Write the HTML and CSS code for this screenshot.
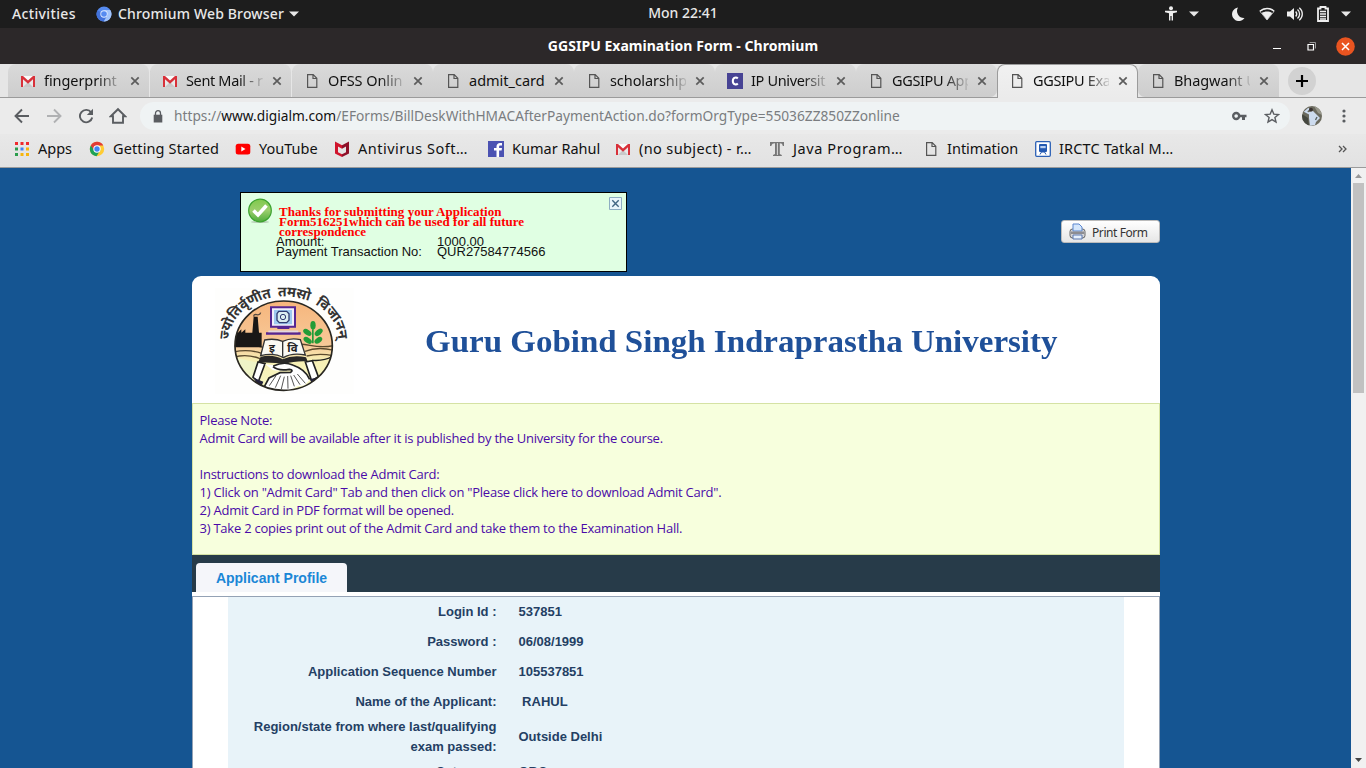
FILE: index.html
```html
<!DOCTYPE html>
<html lang="en">
<head>
<meta charset="utf-8">
<title>GGSIPU Examination Form - Chromium</title>
<link rel="stylesheet" href="styles.css">
</head>
<body>
<svg class="defs" width="0" height="0" aria-hidden="true">
  <symbol id="gmail" viewBox="0 0 16 16"><path fill="#e9e9e9" d="M1 3h14v11H1z"/><path fill="#c9c9c9" d="M3 14l5-5 5 5z"/><path fill="#fafafa" d="M2 3h12L8 8z"/><path fill="#d8313a" d="M1 14V3h2l5 4.400L13 3h2v11h-2V6.200l-5 4.500-5-4.500V14z"/></symbol>
  <symbol id="file" viewBox="0 0 16 16"><path d="M3.600 1.700h5.600l3.600 3.600v9H3.600zM9 1.700v3.800h3.800" fill="none" stroke="#555" stroke-width="1.200"/></symbol>
  <symbol id="close" viewBox="0 0 10 10"><path d="M1.300 1.300l7.400 7.400M8.700 1.300L1.300 8.700" stroke="#5c5c5c" stroke-width="1.700"/></symbol>
  <symbol id="caret" viewBox="0 0 10 6"><path d="M0 .5h10L5 5.500z" fill="#e8e8e8"/></symbol>
</svg>

<header class="topbar">
  <span class="activities">Activities</span>
  <svg class="app-icon" viewBox="0 0 16 16"><circle cx="8" cy="8" r="7.500" fill="#568bf0"/><path d="M8 8L1.500 4.200A7.500 7.500 0 0 0 7.500 15.500l3.700-6z" fill="#4272da"/><path d="M8 4h6.300a7.500 7.500 0 0 1-6.500 11.500L11.600 9z" fill="#a2c4fa"/><circle cx="8" cy="8" r="3.700" fill="#dce9ff"/><circle cx="8" cy="8" r="2.800" fill="#568bf0"/></svg>
  <span class="app-name">Chromium Web Browser</span>
  <svg class="caret"><use href="#caret"/></svg>
  <span class="clock">Mon 22:41</span>
  <div class="tray">
    <svg width="12" height="15" viewBox="0 0 12 15" fill="#eee"><circle cx="6" cy="2.200" r="2"/><path d="M0 4.800h12v1.500L8 7.200v7.300H6.600V10H5.400v4.500H4V7.200L0 6.300z"/></svg>
    <svg class="caret"><use href="#caret"/></svg>
    <svg class="moon" width="13" height="14" viewBox="0 0 13 14"><path d="M6 .5A6.800 6.800 0 1 0 12.500 11 7 7 0 0 1 6 .5z" fill="#eee"/></svg>
    <svg class="wifi" width="16" height="14" viewBox="0 0 16 14"><path d="M1 4.500C5 .5 11 .5 15 4.500L8 13z" fill="none" stroke="#aaa" stroke-width="1"/><path d="M.8 4.200C5 .5 11 .5 15.200 4.200" fill="none" stroke="#eee" stroke-width="1.500"/><path d="M2.700 6c3-2 7.600-2 10.600 0L8 13z" fill="#eee"/></svg>
    <svg class="sound" width="16" height="14" viewBox="0 0 16 14"><path d="M0 4.500h3L7 1v12L3 9.500H0z" fill="#eee"/><path d="M8.700 4.500c1.300 1.500 1.300 3.500 0 5M10.500 2.500c2.800 2.500 2.800 6.500 0 9M12.300.8c4 3.500 4 9 0 12.400" fill="none" stroke="#eee" stroke-width="1.300"/></svg>
    <svg class="battery" width="12" height="16" viewBox="0 0 12 16"><path d="M1 2.500h2.500V1h5v1.500H11V15H1z" fill="none" stroke="#eee" stroke-width="1.800"/><path d="M3 5.500h6M3 8h6M3 10.500h6M3 13h6" stroke="#eee" stroke-width="1.300"/></svg>
    <svg class="caret"><use href="#caret"/></svg>
  </div>
</header>

<div class="titlebar">
  <h1>GGSIPU Examination Form - Chromium</h1>
  <div class="window-buttons">
    <svg width="8" height="8"><path d="M0 6.500h8" stroke="#fff"/></svg>
    <svg class="restore" width="9" height="9"><path d="M1 2.500h5.500v5.500H1z" fill="none" stroke="#fff" stroke-width="1.200"/><path d="M2.500.5h6v6" fill="none" stroke="#999"/></svg>
    <svg width="19" height="19"><circle cx="9.500" cy="9.500" r="9.300" fill="#e95420"/><path d="M6 6l7 7M13 6l-7 7" stroke="#fff" stroke-width="1.500"/></svg>
  </div>
</div>

<nav class="tabs">
  <div class="tab"><svg><use href="#gmail"/></svg><span>fingerprint</span><svg class="x"><use href="#close"/></svg></div>
  <div class="tab tight"><svg><use href="#gmail"/></svg><span>Sent Mail - r</span><svg class="x"><use href="#close"/></svg></div>
  <div class="tab"><svg><use href="#file"/></svg><span>OFSS Onlin</span><svg class="x"><use href="#close"/></svg></div>
  <div class="tab full"><svg><use href="#file"/></svg><span>admit_card</span><svg class="x"><use href="#close"/></svg></div>
  <div class="tab"><svg><use href="#file"/></svg><span>scholarship</span><svg class="x"><use href="#close"/></svg></div>
  <div class="tab tight"><svg viewBox="0 0 16 16"><path fill="#474394" d="M0 0h16v16H0z"/><path d="M10.800 5.500C9.500 4 5.800 4 5.800 8s3.700 4 5 2.500" fill="none" stroke="#fff" stroke-width="2"/></svg><span>IP Universit</span><svg class="x"><use href="#close"/></svg></div>
  <div class="tab tight"><svg><use href="#file"/></svg><span>GGSIPU App</span><svg class="x"><use href="#close"/></svg></div>
  <div class="tab tight active"><svg><use href="#file"/></svg><span>GGSIPU Exa</span><svg class="x"><use href="#close"/></svg></div>
  <div class="tab"><svg><use href="#file"/></svg><span>Bhagwant U</span><svg class="x"><use href="#close"/></svg></div>
  <svg class="new-tab" viewBox="0 0 28 28"><circle cx="14" cy="14" r="14" fill="#d2d2d2"/><path d="M14 8v12M8 14h12" stroke="#000" stroke-width="2.200"/></svg>
</nav>

<div class="toolbar">
  <svg width="16" height="16" viewBox="0 0 16 16"><path d="M15 8H2M8 1.500L1.500 8 8 14.500" fill="none" stroke="#5a5d61" stroke-width="1.900"/></svg>
  <svg width="16" height="16" viewBox="0 0 16 16"><path d="M1 8h13M8 1.500L14.500 8 8 14.500" fill="none" stroke="#b0b1b3" stroke-width="1.900"/></svg>
  <svg width="16" height="16" viewBox="0 0 16 16"><path d="M13.200 4.500A6.200 6.200 0 1 0 14.200 9.500" fill="none" stroke="#5a5d61" stroke-width="1.900"/><path d="M15 .8v6.200H8.800z" fill="#5a5d61"/></svg>
  <svg width="18" height="18" viewBox="0 0 18 18"><path d="M1.800 9.300L9 2.200l7.200 7.100H14v6.500H4V9.300z" fill="none" stroke="#5a5d61" stroke-width="1.900"/></svg>
  <div class="omnibox">
    <svg width="10" height="13" viewBox="0 0 10 13"><path d="M.7 4.700h8.600v7.800H.7z" fill="#5a5d61"/><path d="M2.500 5V3.200a2.500 2.500 0 0 1 5 0V5" fill="none" stroke="#5a5d61" stroke-width="1.300"/></svg>
    <span class="url">https://<b>www.digialm.com</b>/EForms/BillDeskWithHMACAfterPaymentAction.do?formOrgType=55036ZZ850ZZonline</span>
    <svg class="key" width="15" height="10" viewBox="0 0 15 10"><circle cx="4.200" cy="5" r="3" fill="none" stroke="#5a5d61" stroke-width="2.400"/><path d="M7 3.700h7.500v2.600H13V9h-3V6.300H7z" fill="#5a5d61"/></svg>
    <svg class="star" width="16" height="16" viewBox="0 0 16 16"><path d="M8 1.800l1.800 4.300 4.700.4-3.600 3 1.100 4.600L8 11.600l-4 2.500 1.100-4.600-3.600-3 4.700-.4z" fill="none" stroke="#5a5d61" stroke-width="1.400"/></svg>
  </div>
  <svg class="avatar" width="20" height="20" viewBox="0 0 20 20"><clipPath id="av"><circle cx="10" cy="10" r="10"/></clipPath><g clip-path="url(#av)"><path fill="#6b6a5e" d="M0 0h20v20H0z"/><path fill="#98988c" d="M12 0h8v9l-4-2z"/><path fill="#45473f" d="M0 8l6 4 1 8H0z"/><path fill="#cddbee" d="M7 6l4-1 3 3 4 4-4 4-1 3-5 1-1-8z"/><path d="M15 11l-1.500 3" stroke="#59625f" stroke-width="1.400"/><path d="M8 8L3.500 5.500 7 2.500" fill="none" stroke="#cddbee" stroke-width="2"/><circle cx="9" cy="3.600" r="1.900" fill="#3a3330"/></g></svg>
  <svg class="dots" width="4" height="14" viewBox="0 0 4 14" fill="#5a5d61"><circle cx="2" cy="2" r="1.600"/><circle cx="2" cy="7" r="1.600"/><circle cx="2" cy="12" r="1.600"/></svg>
</div>

<nav class="bookmarks">
  <div><svg viewBox="0 0 16 16"><path fill="#f02a2d" d="M1 1h3v3H1zM6.500 1h3v3h-3zM12 1h3v3h-3z"/><path fill="#2a9d4c" d="M1 6.500h3v3H1zM1 12h3v3H1z"/><path fill="#4285f4" d="M6.500 6.500h3v3h-3z"/><path fill="#f7b50b" d="M12 6.500h3v3h-3zM6.500 12h3v3h-3zM12 12h3v3h-3z"/></svg><span>Apps</span></div>
  <div><svg viewBox="0 0 16 16"><circle cx="8" cy="8" r="7.200" fill="#fc3"/><path d="M8 8L1.800 4.400A7.200 7.200 0 0 0 7.500 15.200l4-6.200z" fill="#1da258"/><path d="M1.800 4.400A7.200 7.200 0 0 1 14.300 4.500H8L4.800 9z" fill="#e23b36"/><circle cx="8" cy="8" r="3.700" fill="#fff"/><circle cx="8" cy="8" r="2.700" fill="#4285f4"/></svg><span class="started">Getting Started</span></div>
  <div><svg viewBox="0 0 16 16"><rect x=".7" y="2.700" width="14.600" height="10.800" rx="2.500" fill="#f00"/><path d="M6.300 5.500v5L10.500 8z" fill="#fff"/></svg><span>YouTube</span></div>
  <div><svg viewBox="0 0 16 16"><path d="M1 .5l7 3.800v3.500L4 5.600v5.600l4 2V16l-7-3.500z" fill="#d0142c"/><path d="M15 .5L8 4.300v3.500l4-2.200v5.600l-4 2V16l7-3.500z" fill="#8f1028"/></svg><span class="antivirus">Antivirus Soft…</span></div>
  <div><svg viewBox="0 0 16 16"><path fill="#4b52b2" d="M0 0h16v16H0z"/><path fill="#fff" d="M8.500 16V9.500H6V7h2.500V5.500C8.500 3.200 10 2 12 2h2v2.500h-1.500c-1 0-1.400.5-1.400 1.300V7H14l-.4 2.500h-2.500V16z"/></svg><span>Kumar Rahul</span></div>
  <div><svg><use href="#gmail"/></svg><span class="subject">(no subject) - r…</span></div>
  <div><svg viewBox="0 0 16 16"><path d="M1 1h14v4h-1.200C13.500 3 12.500 2.300 10.800 2.300V13l2 1v1H4v-1l2-1V2.300C4 2.300 2.800 3 2.300 5H1z" fill="#777"/><path d="M8.400 2v12" stroke="#ddd"/></svg><span class="java">Java Program…</span></div>
  <div><svg><use href="#file"/></svg><span>Intimation</span></div>
  <div><svg viewBox="0 0 16 16"><rect x=".7" y=".7" width="14.600" height="14.600" rx="1" fill="#fff" stroke="#2b60b5" stroke-width="1.300"/><rect x="4" y="3" width="8" height="8" rx="1" fill="#2359b1"/><path d="M5.300 5h5.400v2.200H5.300z" fill="#b9d0f1"/><path d="M5 13.500l1.500-2.500h3l1.500 2.500" stroke="#2359b1" fill="none"/></svg><span class="irctc">IRCTC Tatkal M…</span></div>
  <svg class="more" viewBox="0 0 9 8"><path d="M1 1l3 3-3 3M5 1l3 3-3 3" fill="none" stroke="#555" stroke-width="1.300"/></svg>
</nav>

<div class="viewport">
  <main class="page">
    <section class="top-row">
      <div class="notice">
        <svg class="ok" width="26" height="26" viewBox="0 0 26 26"><defs><linearGradient id="g" x2="0" y2="1"><stop stop-color="#7fc94c"/><stop offset=".5" stop-color="#9bce6d"/><stop offset="1" stop-color="#4fac3c"/></linearGradient></defs><ellipse cx="13" cy="25" rx="9" ry="1" fill="#b5cdb5"/><circle cx="13" cy="13.500" r="11.300" fill="url(#g)" stroke="#3ba22e" stroke-width="1.200"/><path d="M6.500 13.500l4.500 4.500L19.500 8.500" fill="none" stroke="#fff" stroke-width="3.600"/></svg>
        <div class="notice-text">
          <p class="thanks">Thanks for submitting your Application<br>Form516251which can be used for all future<br>correspondence</p>
          <dl><dt>Amount:</dt><dd>1000.00</dd><dt>Payment Transaction No:</dt><dd>QUR27584774566</dd></dl>
        </div>
        <svg class="dismiss" width="13" height="13" viewBox="0 0 13 13"><path d="M.5.5h12v12H.5z" fill="#eaf6fb" stroke="#8eaec2"/><path d="M3.300 3.300l6.400 6.400M9.700 3.300L3.300 9.700" stroke="#426783" stroke-width="1.400"/></svg>
      </div>
      <button class="print" type="button">
        <svg width="17" height="17" viewBox="0 0 17 17"><rect x="1" y="6" width="15" height="9" rx="2.500" fill="#d5d5d8" stroke="#666"/><path d="M4 8V1h6l3 3v4z" fill="#d4e6fb" stroke="#5a86cf"/><path d="M2 8.500h13v2.500H2z" fill="#8d8d92"/><path d="M4 12h9v4H4z" fill="#e6f0fc" stroke="#5a76af"/></svg>
        <span>Print Form</span>
      </button>
    </section>

    <section class="banner">
      <svg class="crest" width="200" height="127" viewBox="6 18 600 381">
        <defs><clipPath id="disc"><ellipse cx="281" cy="227" rx="147" ry="134"/></clipPath>
        <linearGradient id="sky" x2="0" y2="1"><stop stop-color="#f6b57c"/><stop offset=".5" stop-color="#f7c998"/><stop offset=".65" stop-color="#f7efb4"/><stop offset="1" stop-color="#f6f7c4"/></linearGradient>
        <path id="arc" d="M118 209A163 130 0 0 1 444 209"/></defs>
        <path d="M75 53h416v320H75z" fill="#fefefd"/>
        <g clip-path="url(#disc)">
          <path d="M130 90h300v275H130z" fill="url(#sky)"/>
          <path d="M130 230q40-12 80 0t75 0 75-4 75 0M130 246q45-10 85 4M345 244q40-16 90-2M130 262q40-12 80 4M350 258q40-10 85 0" fill="none" stroke="#5b4a2e" stroke-width="4"/>
          <path d="M134 232v-44h10l10-10v10l12-10v10h21l4-48h12l4 48h8v44z" fill="#191716"/>
          <path d="M192 140q-2-8 8-6t12-6" fill="none" stroke="#55483f" stroke-width="4"/>
          <path d="M243 112h72v58h-72z" fill="#f1f1fb" stroke="#562693" stroke-width="6"/><path d="M252 120h54v43h-54z" fill="#9ecaf0"/><path d="M266 124h24l7 7v20l-7 7h-22l-7-7v-20z" fill="#d9edf0" stroke="#303d72" stroke-width="4"/><circle cx="279" cy="141" r="8" fill="none" stroke="#303d72" stroke-width="3"/>
          <path d="M262 170h36v7h-36zM228 187h104v7H228z" fill="#562693"/><path d="M235 184h90" stroke="#e1d7e1" stroke-width="5"/>
          <g fill="#239c37"><path d="M366 220v-42h5v42z"/><ellipse cx="369" cy="166" rx="8" ry="13"/><ellipse cx="352" cy="187" rx="14" ry="8" transform="rotate(35 352 187)"/><ellipse cx="386" cy="187" rx="14" ry="8" transform="rotate(-40 386 187)"/><ellipse cx="353" cy="211" rx="14" ry="8" transform="rotate(35 353 211)"/><ellipse cx="385" cy="211" rx="13" ry="8" transform="rotate(-35 385 211)"/></g>
          <path d="M224 210q30-6 54 4 25-12 53-5l15 46q-40-8-66 8-28-16-68-6z" fill="#fafaf4" stroke="#333" stroke-width="4"/><path d="M278 214v46" stroke="#333" stroke-width="4"/>
          <text class="book-glyph" x="237" y="247">इ</text><text class="book-glyph" x="292" y="245">वि</text>
          <path d="M212 260q40-8 66 8 30-14 70-6l5 12q-40-2-68 8-36-6-82-4z" fill="#292828"/>
          <path d="M130 262l75 16-16 58-55-30z" fill="#eff4c7"/><path d="M204 276l21 5-20 54-16-13zM346 276l21-4 18 48-20 13z" fill="#fff" stroke="#222" stroke-width="5"/><path d="M367 271q35 3 62-13" stroke="#222" fill="none" stroke-width="4"/>
          <path d="M190 323l30 12-8 20zM360 328l28-8-18 32z" fill="#23223a"/>
          <path d="M225 282q14 2 30 4 30-12 53 0 38 13 51 43l-15 17-22 3-24 13-30-2-45-8 14-28 35-17 29 1q12-9-4-9-27 5-49 1z" fill="#fff"/>
          <path d="M250 288q32-15 58-3 38 13 51 43M249 290q16 14 49 8 14 1 4 9l-32 1-33 16-14 26" fill="none" stroke="#242424" stroke-width="5"/>
          <path d="M238 347l20-30M256 353l16-36M274 357l9-37M294 356l-1-38M313 349l-11-32M330 344l-19-29M346 340l-24-28" stroke="#555" stroke-width="3"/>
        </g>
        <ellipse cx="281" cy="227" rx="146" ry="134" fill="none" stroke="#292721" stroke-width="5"/>
        <text class="motto"><textPath href="#arc" textLength="460" startOffset="0">ज्योतिर्वृणीत&#160;&#160;तमसो&#160;&#160;विजानन्</textPath></text>
      </svg>
      <h2>Guru Gobind Singh Indraprastha University</h2>
    </section>

    <section class="note">
      Please Note:<br>
      Admit Card will be available after it is published by the University for the course.<br><br>
      Instructions to download the Admit Card:<br>
      1) Click on "Admit Card" Tab and then click on "Please click here to download Admit Card".<br>
      2) Admit Card in PDF format will be opened.<br>
      3) Take 2 copies print out of the Admit Card and take them to the Examination Hall.
    </section>

    <div class="form-tabs"><span>Applicant Profile</span></div>

    <section class="profile">
      <dl class="fields">
        <dt>Login Id :</dt><dd>537851</dd>
        <dt>Password :</dt><dd>06/08/1999</dd>
        <dt>Application Sequence Number</dt><dd>105537851</dd>
        <dt>Name of the Applicant:</dt><dd>&nbsp;RAHUL</dd>
        <dt>Region/state from where last/qualifying exam passed:</dt><dd>Outside Delhi</dd>
        <dt>Category:</dt><dd>OBC</dd>
      </dl>
    </section>
  </main>
  <div class="scrollbar">
    <svg width="7" height="4"><path d="M0 4L3.500 0 7 4z" fill="#999"/></svg>
    <div class="thumb"></div>
    <svg width="7" height="4"><path d="M0 0h7L3.500 4z" fill="#444"/></svg>
  </div>
</div>
</body>
</html>
```
FILE: styles.css
```css
* { box-sizing: border-box; }
body { margin: 0; width: 1366px; height: 768px; overflow: hidden; display: flex; flex-direction: column; font-family: "Noto Sans", sans-serif; }
svg { display: block; flex: none; }
h1, h2, p, dl, dd { margin: 0; }
.defs { position: absolute; }

.topbar { position: relative; height: 28px; flex: none; display: flex; align-items: center; padding: 0 15px 1px 12px; background: #1d1d1d; color: #e8e8e8; font-size: 14px; font-weight: 500; white-space: nowrap; }
.activities { width: 84px; letter-spacing: 0.35px; }
.app-icon { width: 16px; height: 16px; margin-right: 6px; }
.app-name { width: 171px; letter-spacing: 0.15px; }
.caret { width: 10px; height: 6px; }
.clock { position: absolute; left: 0; right: 0; top: 3px; text-align: center; }
.tray { display: flex; align-items: center; margin-left: auto; }
.tray .caret { margin-left: 12px; }
.tray .moon { margin-left: 33px; }
.wifi { margin-left: 14px; }
.sound { margin-left: 12px; }
.battery { margin-left: 14px; }

.titlebar { height: 36px; flex: none; display: grid; grid-template-columns: 1fr auto 1fr; align-items: center; background: #2c2829; color: #fff; }
.titlebar h1 { grid-column: 2; padding-bottom: 2px; font-size: 14px; font-weight: 700; letter-spacing: 0.03px; }
.window-buttons { display: flex; justify-content: flex-end; align-items: center; gap: 26px; padding-right: 11px; }
.restore { margin-right: -6px; }

.tabs { position: relative; height: 34px; flex: none; display: flex; padding-left: 8px; background: #e6e6e6; border-bottom: 1px solid #9b9b9b; }
.tab { position: relative; width: 141px; height: 33px; display: flex; align-items: center; padding-left: 12px; background: linear-gradient(#dadada, #cdcdcd); border-radius: 8px 8px 0 0; font-size: 14.5px; color: #111; }
.tab:nth-child(-n+2) { margin-right: 1px; }
.tab::after { content: ""; position: absolute; right: -2px; top: 7px; width: 1px; height: 20px; background: #9b9b9b; }
.tab:nth-child(n+7)::after { display: none; }
.tab svg { width: 16px; height: 16px; }
.tab svg.x { width: 10px; height: 10px; margin-left: 9px; }
.tab span { width: 77px; margin-left: 8px; padding-bottom: 2px; overflow: hidden; white-space: nowrap; letter-spacing: -0.08px; -webkit-mask-image: linear-gradient(90deg, #000 68%, transparent 104%); mask-image: linear-gradient(90deg, #000 68%, transparent 104%); }
.tab.tight span { letter-spacing: -0.35px; }
.tab.full span { letter-spacing: 0; -webkit-mask-image: none; mask-image: none; }
.tab:nth-child(n+3) span { width: 76px; }
.tab:nth-child(7) { border-bottom-right-radius: 7px; }
.tab:nth-child(9) { border-bottom-left-radius: 7px; }
.tab.active { height: 34px; z-index: 1; padding: 0 0 2px 11px; background: linear-gradient(#f1f1f1, #ebebeb); border: 1px solid #9b9b9b; border-bottom: 0; }
.new-tab { width: 28px; height: 28px; margin: 3px 0 0 9px; }

.toolbar { height: 36px; flex: none; display: flex; align-items: center; padding: 0 19px 0 14px; background: #ebebeb; }
.toolbar > svg { margin-right: 16px; }
.toolbar > svg:nth-child(3) { margin-right: 15px; }
.toolbar > svg:nth-child(4) { margin-right: 13px; }
.omnibox { width: 1150px; height: 28px; display: flex; align-items: center; padding: 0 10px 0 13px; border-radius: 14px; background: #eff3f4; }
.url { margin-left: 11px; padding-bottom: 2px; font-size: 13.72px; color: #7a7d80; white-space: nowrap; }
.url b { font-weight: 400; color: #111; }
.key { margin-left: auto; }
.star { margin-left: 17px; }
.toolbar > .avatar { margin: 0 20px 0 12px; }
.toolbar > .dots { margin: 0; }

.bookmarks { height: 34px; flex: none; display: grid; grid-template-columns: 75px 146px 99px 154px 127px 154px 154px 112px 303px auto; align-items: center; padding: 0 0 3px 14px; background: linear-gradient(#e8e8e8, #e2e2e2); border-bottom: 1px solid #9b9b9b; font-size: 14.5px; color: #111; }
.bookmarks div { display: flex; align-items: center; gap: 8px; white-space: nowrap; }
.bookmarks span { padding-bottom: 2px; }
.bookmarks svg { width: 16px; height: 16px; }
.bookmarks .more { width: 9px; height: 8px; }
.started { letter-spacing: 0.12px; }
.antivirus { letter-spacing: 0.5px; }
.subject { letter-spacing: 0.37px; }
.java { letter-spacing: 0.6px; }
.irctc { letter-spacing: 0.15px; }

.viewport { height: 600px; flex: none; display: flex; background: #155592; overflow: hidden; }
.page { width: 968px; height: 600px; margin-left: 192px; overflow: hidden; }
.top-row { height: 108px; display: flex; align-items: flex-start; padding: 24px 0 0 48px; }
.notice { width: 387px; height: 80px; display: flex; align-items: flex-start; padding: 4px 4px 0 6px; background: #e0ffe3; border: 1px solid #000; }
.notice-text { flex: 1; padding: 10px 0 0 3px; font: 13px/10px "Liberation Sans", sans-serif; color: #111; }
.thanks { margin-left: 3px; font: bold 13px/10px "Liberation Serif", serif; color: #f00; }
.thanks::first-line { letter-spacing: 0.03px; }
.notice dl { display: grid; grid-template-columns: 161px auto; }
.print { margin: 28px 0 0 auto; width: 99px; height: 23px; display: flex; align-items: center; gap: 6px; padding: 0 0 0 7px; border: 1px solid #bbb; border-radius: 3px; background: linear-gradient(#fff, #e6e6e6); font: 12px "Noto Sans", sans-serif; color: #333; white-space: nowrap; }
.print span { padding-top: 2px; letter-spacing: -0.42px; }

.banner { height: 127px; display: flex; align-items: center; background: #fff; border-radius: 9px 9px 0 0; }
.motto { font: bold 42px "Noto Sans Devanagari", "Lohit Devanagari", "FreeSans", sans-serif; fill: #333; }
.book-glyph { font: bold 34px "Noto Sans Devanagari", "Lohit Devanagari", "FreeSans", sans-serif; fill: #222; }
.banner h2 { margin: 2px 0 0 33px; font: bold 32px/40px "Liberation Serif", serif; color: #1f5099; white-space: nowrap; transform: scaleX(1.031); transform-origin: left; }

.note { height: 152px; padding: 7px 6.5px; border: 1px solid #d5e2a4; background: #f7ffdd; color: #4a0aa8; font: 13px/18px "Open Sans", sans-serif; letter-spacing: -0.235px; white-space: nowrap; }
.form-tabs { height: 37px; padding: 8px 0 0 4px; background: #273b49; }
.form-tabs span { display: block; width: 151px; height: 29px; border-radius: 4px 4px 0 0; background: #f5f6fa; color: #1b87d6; font: bold 14px/30px "Liberation Sans", sans-serif; text-align: center; }
.profile { border-top: 4px solid #fff; background: #fff; }
.fields { height: 400px; border: 1px solid #94a2b5; padding: 0 35px; background: linear-gradient(#e8f3f9, #e8f3f9) content-box, #fff; display: grid; grid-template-columns: 268.5px 1fr; grid-template-rows: 30px 30px 30px 30px 40px 30px; column-gap: 22px; align-items: center; font: bold 13px/20px "Liberation Sans", sans-serif; color: #243f64; }
.fields dt { text-align: right; }

.scrollbar { width: 15px; height: 600px; margin-left: auto; display: flex; flex-direction: column; align-items: center; padding: 6px 0; background: #f1f1f1; }
.thumb { width: 11px; height: 210px; margin: 5px 0 auto; background: #c1c1c1; }
```
